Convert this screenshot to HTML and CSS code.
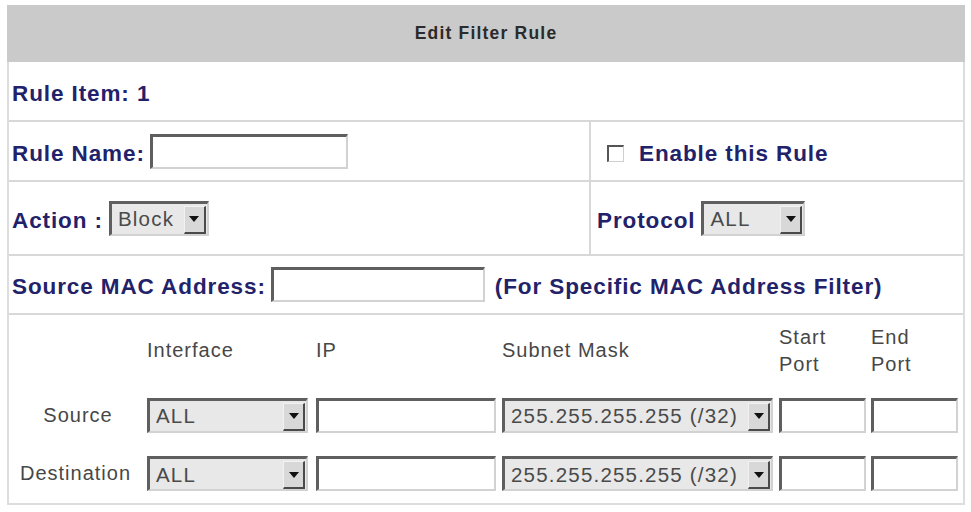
FILE: index.html
```html
<!DOCTYPE html>
<html lang="en">
<head>
<meta charset="utf-8">
<title>Edit Filter Rule</title>
<link rel="stylesheet" href="styles.css">
</head>
<body>
<form class="panel">
  <div class="head">Edit Filter Rule</div>

  <div class="row row-item">
    <span class="label">Rule Item: 1</span>
  </div>

  <div class="row row-split row-name">
    <div class="cell cell-left">
      <label class="label" for="rule-name">Rule Name:</label>
      <input id="rule-name" class="field w-name" type="text">
    </div>
    <div class="cell cell-right">
      <input id="rule-on" class="check" type="checkbox">
      <label class="label enable" for="rule-on">Enable this Rule</label>
    </div>
  </div>

  <div class="row row-split row-action">
    <div class="cell cell-left">
      <span class="label">Action :</span>
      <div class="combo w-action">
        <select class="combo-field"><option>Block</option><option>Pass</option></select>
        <span class="combo-btn"><span class="tri"></span></span>
      </div>
    </div>
    <div class="cell cell-right">
      <span class="label">Protocol</span>
      <div class="combo w-proto">
        <select class="combo-field"><option>ALL</option><option>TCP</option><option>UDP</option><option>ICMP</option></select>
        <span class="combo-btn"><span class="tri"></span></span>
      </div>
    </div>
  </div>

  <div class="row row-mac">
    <label class="label" for="mac">Source MAC Address:</label>
    <input id="mac" class="field w-mac" type="text">
    <span class="label note">(For Specific MAC Address Filter)</span>
  </div>

  <div class="addr">
    <div class="addr-head"></div>
    <div class="addr-head">Interface</div>
    <div class="addr-head">IP</div>
    <div class="addr-head">Subnet Mask</div>
    <div class="addr-head">Start<br>Port</div>
    <div class="addr-head">End<br>Port</div>

    <div class="addr-name">Source</div>
    <div class="addr-cell">
      <div class="combo w-if">
        <select class="combo-field"><option>ALL</option><option>LAN</option><option>WAN</option></select>
        <span class="combo-btn"><span class="tri"></span></span>
      </div>
    </div>
    <div class="addr-cell"><input class="field w-ip" type="text"></div>
    <div class="addr-cell">
      <div class="combo w-mask">
        <select class="combo-field"><option>255.255.255.255 (/32)</option></select>
        <span class="combo-btn"><span class="tri"></span></span>
      </div>
    </div>
    <div class="addr-cell"><input class="field w-port" type="text"></div>
    <div class="addr-cell"><input class="field w-port" type="text"></div>

    <div class="addr-name addr-name-dest">Destination</div>
    <div class="addr-cell">
      <div class="combo w-if">
        <select class="combo-field"><option>ALL</option><option>LAN</option><option>WAN</option></select>
        <span class="combo-btn"><span class="tri"></span></span>
      </div>
    </div>
    <div class="addr-cell"><input class="field w-ip" type="text"></div>
    <div class="addr-cell">
      <div class="combo w-mask">
        <select class="combo-field"><option>255.255.255.255 (/32)</option></select>
        <span class="combo-btn"><span class="tri"></span></span>
      </div>
    </div>
    <div class="addr-cell"><input class="field w-port" type="text"></div>
    <div class="addr-cell"><input class="field w-port" type="text"></div>
  </div>
</form>
</body>
</html>
```

FILE: styles.css
```css
html, body {
  margin: 0;
  background: #ffffff;
}

body {
  font-family: "Liberation Sans", Arial, sans-serif;
  color: #444444;
}

/* outer frame of the rule editor */
.panel {
  box-sizing: border-box;
  width: 958px;
  margin: 5px 0 0 7px;
  border: 2px solid #dddddd;
  border-top: 0;
}

.head {
  height: 57px;
  margin: 0 -2px;
  background: #cacaca;
  display: flex;
  align-items: center;
  justify-content: center;
  font-weight: bold;
  font-size: 17.5px;
  letter-spacing: 1.2px;
  color: #2b2b2b;
}

/* form rows */
.row {
  display: flex;
  align-items: center;
  border-bottom: 2px solid #d8d8d8;
  padding-left: 3px;
}

.row-item   { height: 58px; }
.row-name   { height: 58px; }
.row-action { height: 72px; }
.row-mac    { height: 57px; }

.row-split {
  padding-left: 0;
  align-items: stretch;
}

.cell {
  display: flex;
  align-items: center;
}

.cell-left {
  box-sizing: border-box;
  width: 582px;
  padding-left: 3px;
  border-right: 2px solid #d8d8d8;
}

.cell-right {
  flex: 1;
  padding-left: 16px;
}

.row-action .cell-right {
  padding-left: 6px;
}

.label {
  padding-top: 5px;
  font-weight: bold;
  font-size: 22.5px;
  letter-spacing: 0.9px;
  color: #22226a;
  white-space: nowrap;
}

.enable {
  margin-left: 15px;
}

.note {
  margin-left: 10px;
}

/* sunken text boxes */
.field {
  box-sizing: border-box;
  height: 35px;
  margin: 0;
  padding: 0 4px;
  border-style: solid;
  border-width: 3px 2px 2px 3px;
  border-color: #5f5f5f #d2d2d2 #d2d2d2 #5f5f5f;
  background: #ffffff;
  font: 20px "Liberation Sans", Arial, sans-serif;
  outline: none;
}

.w-name { width: 198px; margin-left: 5px; }
.w-mac  { width: 214px; margin-left: 5px; }
.w-ip   { width: 180px; }
.w-port { width: 87px; }

/* classic drop-down boxes */
.combo {
  box-sizing: border-box;
  height: 35px;
  display: flex;
  align-items: stretch;
  border-style: solid;
  border-width: 3px 2px 2px 3px;
  border-color: #5f5f5f #d2d2d2 #d2d2d2 #5f5f5f;
  background: #e8e8e8;
}

.combo-field {
  -webkit-appearance: none;
  appearance: none;
  flex: 1;
  min-width: 0;
  margin: 0;
  padding: 0 0 0 6px;
  border: 0;
  background: transparent;
  font: 20.5px "Liberation Sans", Arial, sans-serif;
  letter-spacing: 1.2px;
  color: #4a4a4a;
  outline: none;
}

.combo-btn {
  box-sizing: border-box;
  width: 22px;
  margin: 2px 1px 0 0;
  background: #d8d8d8;
  border-style: solid;
  border-width: 1px 2px 2px 1px;
  border-color: #f2f2f2 #4a4a4a #4a4a4a #f2f2f2;
  display: flex;
  align-items: center;
  justify-content: center;
}

.tri {
  width: 0;
  height: 0;
  border-left: 5px solid transparent;
  border-right: 5px solid transparent;
  border-top: 6px solid #111111;
}

.w-action { width: 100px; margin-left: 6px; }
.w-proto  { width: 104px; margin-left: 6px; }
.w-if     { width: 161px; }
.w-mask   { width: 271px; }

/* checkbox */
.check {
  -webkit-appearance: none;
  appearance: none;
  box-sizing: border-box;
  width: 17px;
  height: 17px;
  margin: 4px 0 0 0;
  border-style: solid;
  border-width: 2px 1px 1px 2px;
  border-color: #555555 #cfcfcf #cfcfcf #555555;
  background: #ffffff;
}

/* interface / address grid */
.addr {
  display: grid;
  grid-template-columns: 138px 169px 186px 277px 92px 1fr;
  grid-template-rows: 71px 58px 59px;
  font-size: 20px;
  letter-spacing: 1px;
  color: #474747;
}

.addr-head {
  display: flex;
  align-items: center;
  line-height: 27px;
}

.addr-name {
  display: flex;
  align-items: center;
  justify-content: center;
}

.addr-name-dest {
  justify-content: flex-start;
  padding-left: 11px;
}

.addr-cell {
  display: flex;
  align-items: center;
}
```
